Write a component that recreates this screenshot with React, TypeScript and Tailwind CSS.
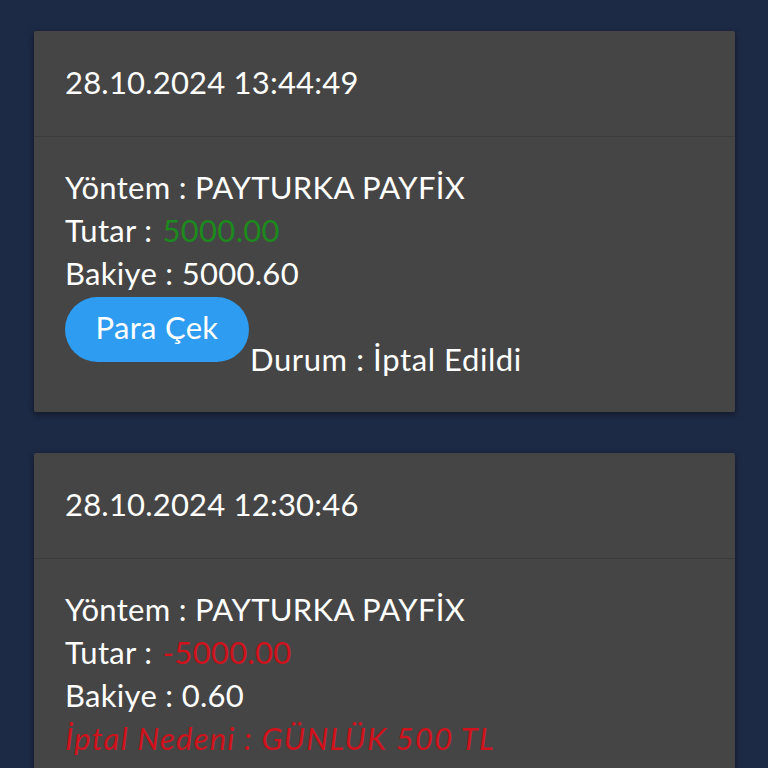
import React from "react";

const font = { fontFamily: "Lato, 'Noto Sans', sans-serif" };

export default function App() {
  return (
    <div className="min-h-screen bg-[#1d2a45] pt-[31px] px-[34px] pr-[33px] pb-8" style={font}>
      <div className="flex flex-col gap-[41px]">
        <div className="bg-[#454545] rounded-[2px] shadow-[0_2px_6px_rgba(0,0,0,0.45)] text-white">
          <div className="px-[31px] pt-[30px] pb-[32px] border-b border-[#3b3b3b] text-[31px] leading-[43px] tracking-[0.2px]">
            28.10.2024 13:44:49
          </div>
          <div className="px-[31px] pt-[29px] pb-[31px] text-[31px] leading-[43px] tracking-[0.3px]">
            <div>Yöntem : PAYTURKA PAYFİX</div>
            <div>
              Tutar : <span className="text-[#1c8a1c] ml-[2px]">5000.00</span>
            </div>
            <div>Bakiye : 5000.60</div>
            <div className="flex items-start mt-[2px]">
              <button className="h-[65px] w-[184px] rounded-full bg-[#2d9cf1] text-white text-[31px] leading-[43px] pb-[4px] tracking-[0.3px]">
                Para Çek
              </button>
              <div className="mt-[41px] ml-[1px] tracking-[0.6px]">Durum : İptal Edildi</div>
            </div>
          </div>
        </div>

        <div className="bg-[#454545] rounded-[2px] shadow-[0_2px_6px_rgba(0,0,0,0.45)] text-white">
          <div className="px-[31px] pt-[30px] pb-[32px] border-b border-[#3b3b3b] text-[31px] leading-[43px] tracking-[0.2px]">
            28.10.2024 12:30:46
          </div>
          <div className="px-[31px] pt-[29px] pb-[31px] text-[31px] leading-[43px] tracking-[0.3px]">
            <div>Yöntem : PAYTURKA PAYFİX</div>
            <div>
              Tutar : <span className="text-[#d0121c] ml-[2px]">-5000.00</span>
            </div>
            <div>Bakiye : 0.60</div>
            <div className="italic text-[#d0121c] tracking-[1.2px]">İptal Nedeni : GÜNLÜK 500 TL</div>
            <div className="italic text-[#d0121c] tracking-[1.2px]">çekim limitidir</div>
          </div>
        </div>
      </div>
    </div>
  );
}
